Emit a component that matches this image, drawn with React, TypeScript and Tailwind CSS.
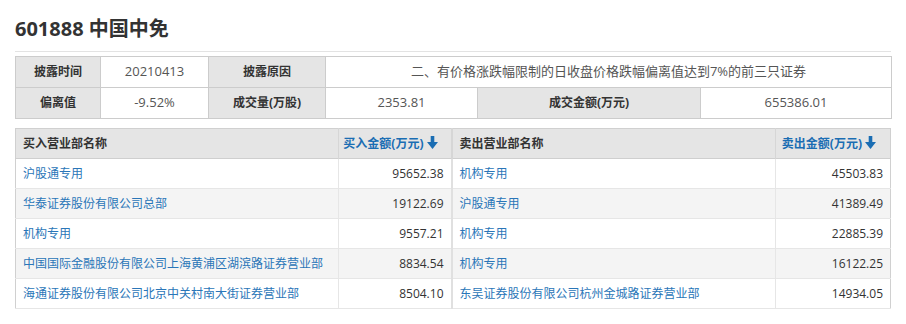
import React from "react";

const font = { fontFamily: '"Open Sans", "Noto Sans CJK SC", sans-serif' };

type Row = { buyName: string; buyAmt: string; sellName: string; sellAmt: string };

const rows: Row[] = [
  { buyName: "沪股通专用", buyAmt: "95652.38", sellName: "机构专用", sellAmt: "45503.83" },
  { buyName: "华泰证券股份有限公司总部", buyAmt: "19122.69", sellName: "沪股通专用", sellAmt: "41389.49" },
  { buyName: "机构专用", buyAmt: "9557.21", sellName: "机构专用", sellAmt: "22885.39" },
  { buyName: "中国国际金融股份有限公司上海黄浦区湖滨路证券营业部", buyAmt: "8834.54", sellName: "机构专用", sellAmt: "16122.25" },
  { buyName: "海通证券股份有限公司北京中关村南大街证券营业部", buyAmt: "8504.10", sellName: "东吴证券股份有限公司杭州金城路证券营业部", sellAmt: "14934.05" },
];

function DownArrow() {
  return (
    <svg width="11" height="13" viewBox="0 0 11 13" className="inline-block ml-[3px] -mt-[3px]" fill="currentColor">
      <rect x="3.7" y="0" width="3.6" height="7" />
      <path d="M0 6 L11 6 L5.5 13 Z" />
    </svg>
  );
}

export default function App() {
  const label = "bg-[#e5e5e5] border border-[#cccccc] text-center text-[#333] font-bold text-[12px]";
  const value = "bg-white border border-[#cccccc] text-center text-[#555] text-[13px]";

  return (
    <div className="w-[906px] h-[324px] bg-white px-[15px] text-[12px]" style={font}>
      <div className="pt-[17px] pb-[10px] border-b border-[#e3e3e3] w-[876px]">
        <h1 className="text-[20px] leading-[24px] font-bold text-[#333]">601888 中国中免</h1>
      </div>

      <table className="mt-[4px] w-[876px] border-collapse table-fixed">
        <colgroup>
          <col className="w-[85px]" />
          <col className="w-[108px]" />
          <col className="w-[117px]" />
          <col className="w-[152px]" />
          <col className="w-[223px]" />
          <col className="w-[191px]" />
        </colgroup>
        <tbody>
          <tr className="h-[31px]">
            <td className={label}>披露时间</td>
            <td className={value}>20210413</td>
            <td className={label}>披露原因</td>
            <td className={value} colSpan={3}>
              二、有价格涨跌幅限制的日收盘价格跌幅偏离值达到7%的前三只证券
            </td>
          </tr>
          <tr className="h-[31px]">
            <td className={label}>偏离值</td>
            <td className={value}>-9.52%</td>
            <td className={label}>成交量(万股)</td>
            <td className={value}>2353.81</td>
            <td className={label}>成交金额(万元)</td>
            <td className={value}>655386.01</td>
          </tr>
        </tbody>
      </table>

      <table className="mt-[9px] w-[875px] border-collapse table-fixed border border-[#d0d0d0]">
        <colgroup>
          <col className="w-[323px]" />
          <col className="w-[113px]" />
          <col className="w-[324px]" />
          <col className="w-[115px]" />
        </colgroup>
        <thead>
          <tr className="h-[30px] bg-[#e5e5e5] border-b border-[#cfcfcf]">
            <th className="text-left font-bold text-[#333] pl-[7px] border-r border-[#d6d6d6]">买入营业部名称</th>
            <th className="text-right pr-[13px] font-bold text-[#1a6db3] border-r-2 border-[#d6d6d6]">
              买入金额(万元)<DownArrow />
            </th>
            <th className="text-left font-bold text-[#333] pl-[7px] border-r border-[#d6d6d6]">卖出营业部名称</th>
            <th className="text-right pr-[14px] font-bold text-[#1a6db3]">
              卖出金额(万元)<DownArrow />
            </th>
          </tr>
        </thead>
        <tbody>
          {rows.map((r, i) => (
            <tr key={i} className={`h-[30px] border-b border-[#e6e6e6] ${i % 2 === 1 ? "bg-[#f4f4f4]" : "bg-white"}`}>
              <td className="pl-[7px] text-[#2a76b8] whitespace-nowrap border-r border-[#e6e6e6]">{r.buyName}</td>
              <td className="pr-[7px] text-right text-[#333] border-r-2 border-[#e0e0e0]">{r.buyAmt}</td>
              <td className="pl-[7px] text-[#2a76b8] whitespace-nowrap border-r border-[#e6e6e6]">{r.sellName}</td>
              <td className="pr-[7px] text-right text-[#333]">{r.sellAmt}</td>
            </tr>
          ))}
        </tbody>
      </table>
    </div>
  );
}
